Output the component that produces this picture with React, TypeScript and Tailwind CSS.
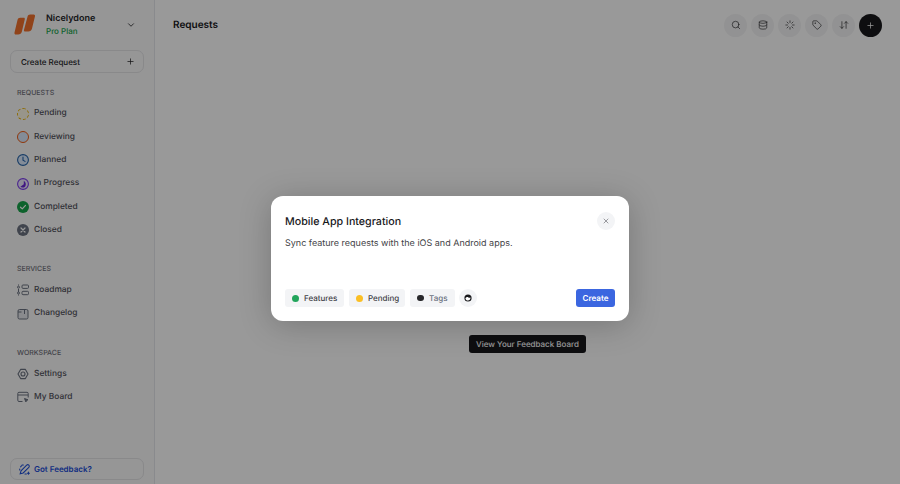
import { ChevronDown, Plus, X, Search, Database, Loader, Tag, ArrowDownUp } from "lucide-react";
import type { ReactNode } from "react";

function Logo() {
  return (
    <svg width="22" height="22" viewBox="0 0 22 22">
      <path d="M3.500 6 C3.800 4.600 4.800 3.700 6.200 3.700 L9.700 3.700 C10.600 3.700 11 4.400 10.800 5.200 L7.900 17.500 C7.500 19.300 6 20.500 4.200 20.500 L2 20.500 C.8 20.500 .2 19.600 .5 18.400z" fill="#f0702c" />
      <path d="M13.500 2.800 C13.800 1.400 14.800 .5 16.200 .5 L19.700 .5 C20.700 .5 21.200 1.300 21 2.200 L18 14.500 C17.600 16.300 16.100 17.500 14.300 17.500 L11.200 17.500 C10.200 17.500 9.700 16.700 10 15.700z" fill="#f0702c" />
    </svg>
  );
}

function Pending() {
  return <span className="block w-[12px] h-[12px] rounded-full border-[1.5px] border-dashed border-[#eab308] bg-[#fef9e7]" />;
}

function Reviewing() {
  return <span className="block w-[12px] h-[12px] rounded-full border-[1.5px] border-[#f25c12] bg-[#dbeafe]" />;
}

function Planned() {
  return (
    <svg width="12" height="12" viewBox="0 0 12 12" fill="none" stroke="#2563a8" strokeWidth="1.100">
      <circle cx="6" cy="6" r="5.400" fill="#dbeafe" />
      <path d="M6 3v3.200l2 1.200" strokeLinecap="round" />
    </svg>
  );
}

function InProgress() {
  return (
    <svg width="12" height="12" viewBox="0 0 12 12" fill="none">
      <circle cx="6" cy="6" r="5.400" stroke="#7c3aed" strokeWidth="1.100" fill="#ede9fe" />
      <path d="M6.800 2.800v3.400L3.400 8.800C4.500 10 7 9.800 8.200 8.400 9.300 7 9 4 6.800 2.800z" fill="#6d28d9" />
    </svg>
  );
}

function Completed() {
  return (
    <svg width="12" height="12" viewBox="0 0 12 12" fill="none">
      <circle cx="6" cy="6" r="6" fill="#16a34a" />
      <path d="M3.500 6.200l1.800 1.700 3.200-3.500" stroke="#fff" strokeWidth="1.200" strokeLinecap="round" strokeLinejoin="round" />
    </svg>
  );
}

function Closed() {
  return (
    <svg width="12" height="12" viewBox="0 0 12 12" fill="none">
      <circle cx="6" cy="6" r="6" fill="#6b7280" />
      <path d="M4 4l4 4M8 4l-4 4" stroke="#fff" strokeWidth="1.200" strokeLinecap="round" />
    </svg>
  );
}

function RoadmapIcon() {
  return (
    <svg width="12" height="12" viewBox="0 0 12 12" fill="none" stroke="#6b7280" strokeWidth="1">
      <path d="M1.500 .5v1M1.500 5v3M1.500 10.500v1" />
      <circle cx="1.500" cy="3.200" r="1" />
      <circle cx="1.500" cy="9" r="1" />
      <rect x="5" y="1" width="6.500" height="3.400" rx="1" />
      <rect x="5" y="7.300" width="6.500" height="3.400" rx="1" />
    </svg>
  );
}

function ChangelogIcon() {
  return (
    <svg width="12" height="12" viewBox="0 0 12 12" fill="none" stroke="#6b7280" strokeWidth="1">
      <rect x="1" y="1.500" width="10" height="9.500" rx="1.500" fill="#e5e7eb" />
      <path d="M1 4h3.500M7.500 1.500V6" />
    </svg>
  );
}

function SettingsIcon() {
  return (
    <svg width="12" height="12" viewBox="0 0 12 12" fill="none" stroke="#6b7280" strokeWidth="1.100" strokeLinejoin="round">
      <path d="M3.600 1.400h4.800L11 6l-2.600 4.600H3.600L1 6z" />
      <circle cx="6" cy="6" r="2" />
    </svg>
  );
}

function BoardIcon() {
  return (
    <svg width="12" height="12" viewBox="0 0 12 12" fill="none" stroke="#6b7280" strokeWidth="1">
      <path d="M5.500 10.500H2a1.200 1.200 0 0 1-1.200-1.200V2.500A1.200 1.200 0 0 1 2 1.300h8a1.200 1.200 0 0 1 1.200 1.200v4" />
      <path d="M1 4h10" />
      <path d="M7.500 7.500l3.500 1.300-1.500.6-.6 1.500z" fill="#6b7280" />
    </svg>
  );
}

function FeedbackIcon() {
  return (
    <svg width="13" height="13" viewBox="0 0 15 15" fill="none" stroke="#1d4ed8" strokeWidth="1.200" strokeLinecap="round">
      <path d="M3 4.500l1.800-2.200h2" strokeDasharray="1.500 1.200" />
      <path d="M2.500 12.500l1-3.500 6.500-6.500a1.700 1.700 0 0 1 2.500 2.500L6 11.500z" />
      <path d="M2 8V6" strokeDasharray="1 1" />
      <path d="M8 12.800h1.600M12 10.500v2.500M10.800 11.800h2.400" />
    </svg>
  );
}

function NavItem({ icon, label }: { icon: ReactNode; label: string }) {
  return (
    <div className="flex items-center h-[23.300px] pl-[17px]">
      <span className="w-[17px] flex items-center justify-start">{icon}</span>
      <span className="text-[8.400px] font-medium text-[#52525b]">{label}</span>
    </div>
  );
}

function SectionTitle({ children }: { children: string }) {
  return <div className="pl-[17px] text-[7px] leading-[12px] font-medium uppercase text-[#71717a]">{children}</div>;
}

function Chip({ icon, label, muted, width }: { icon: ReactNode; label: string; muted?: boolean; width: string }) {
  return (
    <div className={`h-[18px] flex items-center gap-[5px] pl-[7px] rounded-[3px] bg-[#f3f4f6] ${width}`}>
      {icon}
      <span className={`text-[8px] font-medium ${muted ? "text-[#6b7280]" : "text-[#3f3f46]"}`}>{label}</span>
    </div>
  );
}

function RoundButton({ children }: { children: ReactNode }) {
  return <div className="w-[23px] h-[23px] rounded-full bg-[#f4f4f5] flex items-center justify-center text-[#27272a]">{children}</div>;
}

export default function App() {
  return (
    <div className="relative w-[900px] h-[484px] overflow-hidden bg-white flex font-['Inter',sans-serif] [text-rendering:geometricPrecision]">
      <aside className="w-[155px] h-full shrink-0 bg-[#fafafa] border-r border-[#e5e7eb] flex flex-col">
        <div className="flex items-center h-[50px] pl-[14px] pr-[18px]">
          <Logo />
          <div className="ml-[10px] flex-1">
            <div className="text-[9px] leading-[12px] font-semibold text-[#27272a]">Nicelydone</div>
            <div className="text-[8px] leading-[12px] font-medium text-[#16a34a]">Pro Plan</div>
          </div>
          <ChevronDown size={10} strokeWidth={2} className="text-[#27272a]" />
        </div>
        <div className="mx-[10px] h-[23px] pl-[10px] pr-[8px] rounded-[7px] border border-[#e4e4e7] bg-[#fafafa] flex items-center justify-between">
          <span className="text-[8px] font-medium text-[#27272a]">Create Request</span>
          <Plus size={9} strokeWidth={2} className="text-[#27272a]" />
        </div>
        <div className="mt-[14px] mb-[3px]"><SectionTitle>Requests</SectionTitle></div>
        <NavItem icon={<Pending />} label="Pending" />
        <NavItem icon={<Reviewing />} label="Reviewing" />
        <NavItem icon={<Planned />} label="Planned" />
        <NavItem icon={<InProgress />} label="In Progress" />
        <NavItem icon={<Completed />} label="Completed" />
        <NavItem icon={<Closed />} label="Closed" />
        <div className="mt-[21px] mb-[4px]"><SectionTitle>Services</SectionTitle></div>
        <NavItem icon={<RoadmapIcon />} label="Roadmap" />
        <NavItem icon={<ChangelogIcon />} label="Changelog" />
        <div className="mt-[22px] mb-[3px]"><SectionTitle>Workspace</SectionTitle></div>
        <NavItem icon={<SettingsIcon />} label="Settings" />
        <NavItem icon={<BoardIcon />} label="My Board" />
        <div className="mt-auto mx-[10px] mb-[4px] h-[22px] rounded-[7px] border border-[#e4e4e7] flex items-center gap-[3px] pl-[7px]">
          <FeedbackIcon />
          <span className="text-[8px] font-semibold text-[#1d4ed8]">Got Feedback?</span>
        </div>
      </aside>

      <main className="flex-1 relative">
        <header className="h-[50px] flex items-center justify-between pl-[18px] pr-[18px]">
          <h1 className="text-[10px] font-semibold text-[#18181b]">Requests</h1>
          <div className="flex items-center gap-[4px]">
            <RoundButton><Search size={10} strokeWidth={1.600} /></RoundButton>
            <RoundButton><Database size={10} strokeWidth={1.600} /></RoundButton>
            <RoundButton><Loader size={10} strokeWidth={1.600} /></RoundButton>
            <RoundButton><Tag size={10} strokeWidth={1.600} /></RoundButton>
            <RoundButton><ArrowDownUp size={10} strokeWidth={1.600} /></RoundButton>
            <div className="w-[23px] h-[23px] rounded-full bg-[#18181b] flex items-center justify-center text-white">
              <Plus size={9} strokeWidth={2} />
            </div>
          </div>
        </header>
        <div className="absolute left-[314px] top-[335px] h-[18px] px-[7px] rounded-[3px] bg-[#18181b] flex items-center text-[8px] font-medium text-white">
          View Your Feedback Board
        </div>
      </main>

      <div className="absolute inset-0 bg-black/40 flex items-start justify-center">
        <div className="mt-[196px] w-[358px] h-[125px] rounded-[12px] bg-white shadow-[0_4px_32px_rgba(0,0,0,0.22)] pt-[16px] px-[14px] pb-[14px] flex flex-col">
          <div className="flex items-start justify-between">
            <h2 className="mt-[1px] text-[10.700px] leading-[18px] font-medium text-[#18181b]">Mobile App Integration</h2>
            <div className="w-[18px] h-[18px] rounded-full bg-[#f3f4f6] flex items-center justify-center text-[#3f3f46]">
              <X size={8} strokeWidth={1.500} />
            </div>
          </div>
          <p className="mt-[6px] text-[9px] leading-[14px] text-[#3f3f46]">Sync feature requests with the iOS and Android apps.</p>
          <div className="mt-auto flex items-center">
            <Chip width="w-[59px]" icon={<span className="w-[7px] h-[7px] rounded-full bg-[#22a55b]" />} label="Features" />
            <div className="ml-[5px]">
              <Chip width="w-[56px]" icon={<span className="w-[7px] h-[7px] rounded-full bg-[#fbbf24]" />} label="Pending" />
            </div>
            <div className="ml-[5px]">
              <Chip width="w-[45px]" icon={<span className="w-[7px] h-[6px] rounded-[3px] bg-[#27272a]" />} label="Tags" muted />
            </div>
            <div className="ml-[4px] w-[18px] h-[18px] rounded-full bg-[#f3f4f6] flex items-center justify-center">
              <svg width="8" height="8" viewBox="0 0 8 8">
                <circle cx="4" cy="4" r="3.600" fill="#18181b" />
                <path d="M1.400 4.200c1-1.300 2-1.600 3-.8.600.5 1.300.5 2.200.2C6.400 5.500 5.400 6.600 4 6.600S1.700 5.500 1.400 4.200z" fill="#fff" />
              </svg>
            </div>
            <div className="ml-auto h-[18px] w-[39px] rounded-[3px] bg-[#3b66e0] flex items-center justify-center text-[8px] font-semibold text-white">Create</div>
          </div>
        </div>
      </div>
    </div>
  );
}
